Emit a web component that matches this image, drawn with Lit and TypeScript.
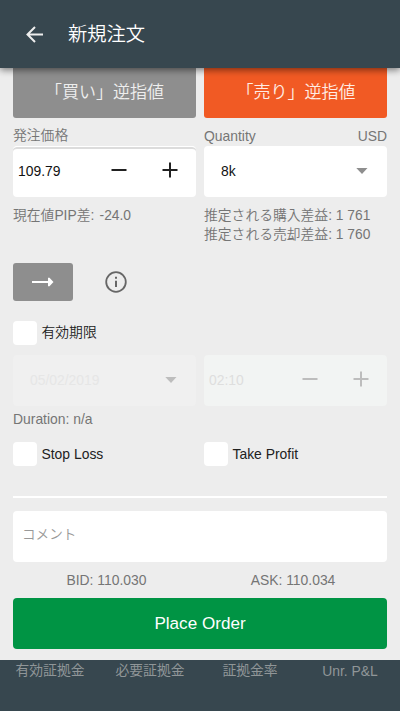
import { LitElement, html, css } from "lit";
import { customElement, property } from "lit/decorators.js";

const minus = html`<svg width="16" height="16" viewBox="0 0 16 16">
  <path d="M.5 8h15" stroke="currentColor" stroke-width="2" />
</svg>`;
const plus = html`<svg width="16" height="16" viewBox="0 0 16 16">
  <path d="M.5 8h15M8 .5v15" stroke="currentColor" stroke-width="2" />
</svg>`;
const caret = html`<svg class="caret" width="12" height="6" viewBox="0 0 12 6">
  <path d="M.3 0h11.2L6 6z" fill="currentColor" />
</svg>`;

@customElement("check-item")
class CheckItem extends LitElement {
  @property() label = "";
  static styles = css`
    :host { display: flex; align-items: center; height: 24px; color: #212121; }
    .box { width: 23.5px; height: 24px; border-radius: 4px; background: #fff; margin-right: 5px; }
    .text { line-height: 24px; }
  `;
  render() {
    return html`<span class="box"></span><span class="text">${this.label}</span>`;
  }
}

@customElement("app-root")
class AppRoot extends LitElement {
  static styles = css`
    :host {
      display: flex;
      flex-direction: column;
      height: 711px;
      overflow: hidden;
      background: #ededed;
      color: #757575;
      font: 13.9px/19px "Liberation Sans", "Noto Sans CJK JP", sans-serif;
      white-space: nowrap;
    }
    * { box-sizing: border-box; }
    svg { display: block; flex: none; }
    .bar {
      display: flex;
      align-items: center;
      height: 68px;
      flex: none;
      padding-left: 26px;
      background: #37474f;
      color: #fff;
      box-shadow: 0 2px 7px rgba(0, 0, 0, 0.5);
      position: relative;
      z-index: 1;
    }
    .title { font-size: 19.3px; font-weight: 350; margin: 2px 0 0 25px; line-height: 28px; }
    .form { height: 592px; flex: none; padding: 0 13px; }
    .pair { display: grid; grid-template-columns: 183px 183px; column-gap: 8px; }
    .side {
      height: 50px;
      border-radius: 0 0 3px 3px;
      display: flex;
      align-items: center;
      justify-content: center;
      font-size: 17px;
      font-weight: 350;
      color: #ffece4;
      padding-bottom: 1px;
    }
    .buy { background: #8e8e8e; color: #eee; }
    .sell { background: #f15a24; padding-left: 1px; }
    .labels { height: 28px; padding-top: 9px; }
    .labels .jp { margin-top: -1px; }
    .split { display: flex; justify-content: space-between; }
    .field {
      display: flex;
      align-items: center;
      height: 51px;
      border-radius: 4px;
      background: #fff;
      color: #111;
      padding-left: 5px;
    }
    .price { border-top: 1px solid #fff; box-shadow: inset 0 2px #dcdcdc; padding-bottom: 2px; }
    .value { flex: 1; }
    .stepper { display: flex; gap: 35px; padding-right: 18px; color: #212121; }
    .price .stepper { margin-top: -2px; }
    .field .caret { margin-right: 19px; color: #8e8e8e; }
    .price + .select .caret { margin-top: -1px; }
    .select { padding-left: 17px; }
    .hints { padding-top: 9px; height: 66px; }
    .jp { font-size: 13.8px; font-weight: 350; }
    .gap { word-spacing: 1.5px; }
    .tools { display: flex; align-items: center; gap: 32px; height: 38px; }
    .next {
      width: 60px;
      height: 38px;
      display: grid;
      place-items: center;
      background: #8e8e8e;
      border-radius: 3px;
    }
    .expiry { margin-top: 20px; font-size: 13.8px; font-weight: 350; }
    .off { margin-top: 10px; }
    .off .field { background: #f0f0f0; color: #e6e6e6; padding-bottom: 1px; }
    .off .time { background: #f2f4f3; color: #dedede; }
    .off .caret, .off .stepper { color: #bdbdbd; }
    .off .caret { margin-top: -1px; }
    .off .stepper { margin-top: -3px; }
    .duration { margin-top: 4px; height: 32px; }
    .rule { height: 2px; background: #fff; margin: 30px 0 13px; }
    .comment { color: #999; padding: 0 0 4px 9px; font-size: 13.6px; font-weight: 350; }
    .quotes { height: 36px; padding-top: 9px; text-align: center; }
    .quotes :first-child { padding-left: 4px; }
    .quotes :last-child { padding-right: 5px; }
    .place {
      height: 51px;
      border-radius: 4px;
      background: #009444;
      color: #fff;
      font-size: 17.1px;
      display: flex;
      align-items: center;
      justify-content: center;
    }
    .account {
      flex: 1;
      background: #37474f;
      color: #909698;
      display: grid;
      grid-template-columns: repeat(4, 1fr);
      text-align: center;
      padding-top: 2px;
    }
    .account .jp { font-weight: 400; margin-top: -1px; }
  `;

  render() {
    return html`
      <div class="bar">
        <svg width="17" height="18" viewBox="0 0 17 18">
          <path d="M17 9.5H2M9 2L1.5 9.5L9 17" fill="none" stroke="#eee" stroke-width="2" />
        </svg>
        <span class="title">新規注文</span>
      </div>
      <div class="form">
        <div class="pair">
          <div class="side buy">「買い」逆指値</div>
          <div class="side sell">「売り」逆指値</div>
        </div>
        <div class="pair labels">
          <span class="jp">発注価格</span>
          <span class="split"><span>Quantity</span><span>USD</span></span>
        </div>
        <div class="pair">
          <div class="field price">
            <span class="value">109.79</span><span class="stepper">${minus}${plus}</span>
          </div>
          <div class="field select"><span class="value">8k</span>${caret}</div>
        </div>
        <div class="pair hints">
          <div class="jp gap">現在値PIP差: -24.0</div>
          <div class="jp">推定される購入差益: 1 761<br />推定される売却差益: 1 760</div>
        </div>
        <div class="tools">
          <div class="next">
            <svg width="22" height="10" viewBox="0 0 22 10">
              <path d="M0 4h16V.8h1.5L21.5 5L17.5 9.2H16V6H0z" fill="#fff" />
            </svg>
          </div>
          <svg width="22" height="22" viewBox="0 0 22 22">
            <circle cx="11" cy="11" r="9.8" fill="none" stroke="#666" stroke-width="1.8" />
            <path d="M11 9.7v6.3M11 5.7v2" stroke="#666" stroke-width="2" />
          </svg>
        </div>
        <check-item class="expiry" label="有効期限"></check-item>
        <div class="pair off">
          <div class="field select"><span class="value">05/02/2019</span>${caret}</div>
          <div class="field time">
            <span class="value">02:10</span><span class="stepper">${minus}${plus}</span>
          </div>
        </div>
        <div class="duration">Duration: n/a</div>
        <div class="pair">
          <check-item label="Stop Loss"></check-item>
          <check-item label="Take Profit"></check-item>
        </div>
        <div class="rule"></div>
        <div class="field comment">コメント</div>
        <div class="pair quotes"><span>BID: 110.030</span><span>ASK: 110.034</span></div>
        <div class="place">Place Order</div>
      </div>
      <div class="account">
        <span class="jp">有効証拠金</span><span class="jp">必要証拠金</span>
        <span class="jp">証拠金率</span><span>Unr. P&amp;L</span>
      </div>
    `;
  }
}
